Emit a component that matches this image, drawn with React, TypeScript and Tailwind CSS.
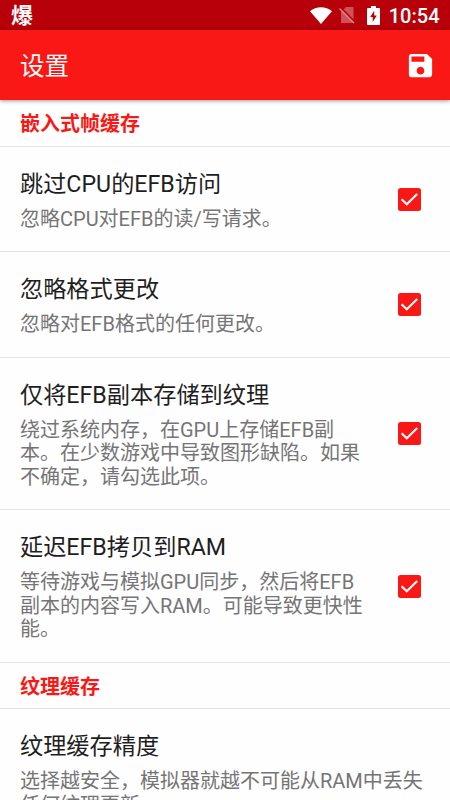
import React, { useState } from 'react';
import { MdSave } from 'react-icons/md';

interface Setting {
  id: string;
  title: string;
  summary: string[];
  checkable: boolean;
}

interface Section {
  title: string;
  settings: Setting[];
}

const sections: Section[] = [
  {
    title: '嵌入式帧缓存',
    settings: [
      { id: 'skip-efb', title: '跳过CPU的EFB访问', summary: ['忽略CPU对EFB的读/写请求。'], checkable: true },
      { id: 'ignore-format', title: '忽略格式更改', summary: ['忽略对EFB格式的任何更改。'], checkable: true },
      {
        id: 'efb-texture',
        title: '仅将EFB副本存储到纹理',
        summary: ['绕过系统内存，在GPU上存储EFB副', '本。在少数游戏中导致图形缺陷。如果', '不确定，请勾选此项。'],
        checkable: true,
      },
      {
        id: 'defer-efb',
        title: '延迟EFB拷贝到RAM',
        summary: ['等待游戏与模拟GPU同步，然后将EFB', '副本的内容写入RAM。可能导致更快性', '能。'],
        checkable: true,
      },
    ],
  },
  {
    title: '纹理缓存',
    settings: [
      {
        id: 'texture-accuracy',
        title: '纹理缓存精度',
        summary: ['选择越安全，模拟器就越不可能从RAM中丢失', '任何纹理更新。'],
        checkable: false,
      },
    ],
  },
];

function StatusBar() {
  return (
    <div className="flex h-[30px] shrink-0 items-center bg-[#b70009] pl-[11px] pr-[10.5px] text-white">
      <span className="pt-[2px] text-[22px] font-bold leading-[30px]">爆</span>
      <div className="ml-auto flex items-center">
        <svg className="h-[17px] w-[22px]" viewBox="0 0 22 17" fill="currentColor">
          <path d="M0 4.2C6.2-1.1 15.8-1.1 22 4.2L11 17z" />
        </svg>
        <svg className="ml-[7px] h-[18px] w-[17px]" viewBox="0 0 17 18">
          <path d="M7 1h7.5v16H2V6z" fill="#fff" fillOpacity=".32" />
          <path d="M1.6 1.4 16 16" stroke="#b70009" strokeWidth="1.6" />
          <path d="M.5 2.5 15 17.2" stroke="#e58c90" strokeWidth="1.2" />
        </svg>
        <svg className="ml-[11px] h-[19px] w-[13px]" viewBox="0 0 13 19">
          <path d="M4 0h5v2h3q1 0 1 1v15q0 1-1 1H1q-1 0-1-1V3q0-1 1-1h3z" fill="#fff" />
          <path d="M7.2 4.7 3.2 11h2.5v5l4.1-6.6H7.2z" fill="#b70009" />
        </svg>
        <span className="ml-[8.5px] pt-px text-[20px] font-medium leading-[30px]">10:54</span>
      </div>
    </div>
  );
}

function CheckBox({ checked, label, onChange }: { checked: boolean; label: string; onChange: () => void }) {
  return (
    <button role="checkbox" aria-checked={checked} aria-label={label} onClick={onChange} className="mb-[2px] shrink-0">
      <svg className="h-[23px] w-[23px]" viewBox="0 0 23 23" fill="none">
        {checked ? (
          <>
            <rect width="23" height="23" rx="2.5" fill="#f91815" />
            <path d="m3.6 11.2 5.2 5.1L19.2 6" stroke="#fff" strokeWidth="2.1" />
          </>
        ) : (
          <rect x="1" y="1" width="21" height="21" rx="2" stroke="#757575" strokeWidth="2" />
        )}
      </svg>
    </button>
  );
}

export default function App() {
  const [checked, setChecked] = useState<Record<string, boolean>>({
    'skip-efb': true,
    'ignore-format': true,
    'efb-texture': true,
    'defer-efb': true,
  });

  const toggle = (id: string) => setChecked(prev => ({ ...prev, [id]: !prev[id] }));

  return (
    <div className="flex h-[800px] w-[450px] flex-col overflow-hidden bg-[#fefefe] font-[Roboto,'Noto_Sans_CJK_SC',sans-serif]">
      <StatusBar />
      <header className="z-10 flex h-[70px] shrink-0 items-center justify-between bg-[#f91815] pl-[20px] pr-[14.5px] text-white shadow-[0_1px_4px_rgba(0,0,0,0.4)]">
        <h1 className="pt-[3px] text-[24.5px] leading-[32px]">设置</h1>
        <button aria-label="保存">
          <MdSave className="h-[31px] w-[31px]" />
        </button>
      </header>

      <main className="min-h-0 flex-1 overflow-hidden">
        {sections.map(section => (
          <section key={section.title}>
            <h2 className="h-[46.5px] border-b border-[#e4e4e4] pl-[20px] text-[20px] font-bold leading-[48px] text-[#f91815]">
              {section.title}
            </h2>
            {section.settings.map(s => (
              <div key={s.id} className="flex items-center border-b border-[#e4e4e4] pb-[20px] pl-[20px] pr-[29px] pt-[23px]">
                <div className="min-w-0 flex-1 whitespace-nowrap">
                  <h3 className="text-[23.2px] leading-[28px] text-[#1e1e1e]">{s.title}</h3>
                  <p className="mt-[10px] text-[20px] leading-[23.5px] text-[#757575]">
                    {s.summary.map(line => (
                      <span key={line} className="block">{line}</span>
                    ))}
                  </p>
                </div>
                {s.checkable && <CheckBox checked={checked[s.id]} label={s.title} onChange={() => toggle(s.id)} />}
              </div>
            ))}
          </section>
        ))}
      </main>
    </div>
  );
}
